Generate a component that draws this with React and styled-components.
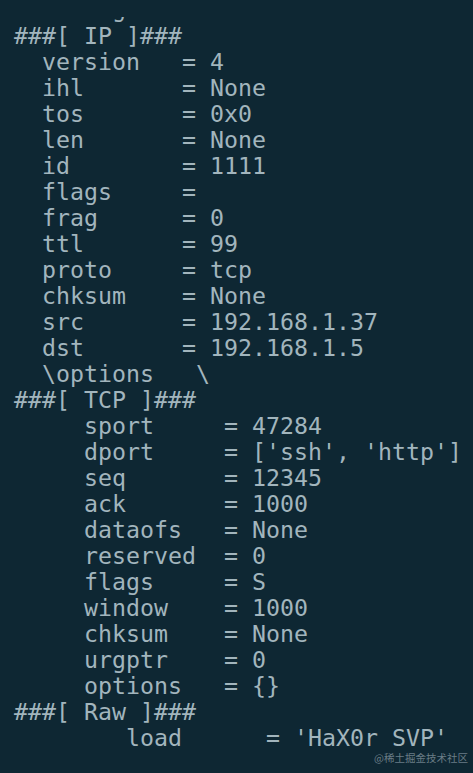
import React from "react";
import styled, { createGlobalStyle } from "styled-components";

const GlobalStyle = createGlobalStyle`
	html, body {
		margin: 0;
		padding: 0;
		background-color: #0e2733;
	}
`;

const lines = [
	"###[ IP ]###",
	"  version   = 4",
	"  ihl       = None",
	"  tos       = 0x0",
	"  len       = None",
	"  id        = 1111",
	"  flags     = ",
	"  frag      = 0",
	"  ttl       = 99",
	"  proto     = tcp",
	"  chksum    = None",
	"  src       = 192.168.1.37",
	"  dst       = 192.168.1.5",
	"  \\options   \\",
	"###[ TCP ]###",
	"     sport     = 47284",
	"     dport     = ['ssh', 'http']",
	"     seq       = 12345",
	"     ack       = 1000",
	"     dataofs   = None",
	"     reserved  = 0",
	"     flags     = S",
	"     window    = 1000",
	"     chksum    = None",
	"     urgptr    = 0",
	"     options   = {}",
	"###[ Raw ]###",
	"        load      = 'HaX0r SVP'",
];

const App = () => {
	return (
		<Page>
			<GlobalStyle />
			<Terminal>
				<TopEdge>
					<Peek>
						<Line>{"       g"}</Line>
					</Peek>
				</TopEdge>
				{lines.map((text, i) => (
					<Line key={i}>{text}</Line>
				))}
			</Terminal>
			<Watermark>@稀土掘金技术社区</Watermark>
		</Page>
	);
};

export default App;

const Page = styled.div`
	position: relative;
	width: 473px;
	height: 773px;
	overflow: hidden;
	background-color: #0e2733;
`;

const Terminal = styled.div`
	padding-left: 14px;
	font-family: "DejaVu Sans Mono", "Liberation Mono", monospace;
	font-size: 23.25px;
	line-height: 26px;
	color: #a2b5bd;
`;

const TopEdge = styled.div`
	height: 23px;
	display: flex;
	flex-direction: column;
	justify-content: flex-end;
`;

const Peek = styled.div`
	height: 6px;
	overflow: hidden;
	& > div {
		margin-top: -21px;
	}
`;

const Line = styled.div`
	white-space: pre;
	height: 26px;
`;

const Watermark = styled.div`
	position: absolute;
	right: 5px;
	bottom: 8px;
	font-family: "Noto Sans CJK SC", sans-serif;
	font-size: 10.5px;
	color: #6a7d86;
`;
